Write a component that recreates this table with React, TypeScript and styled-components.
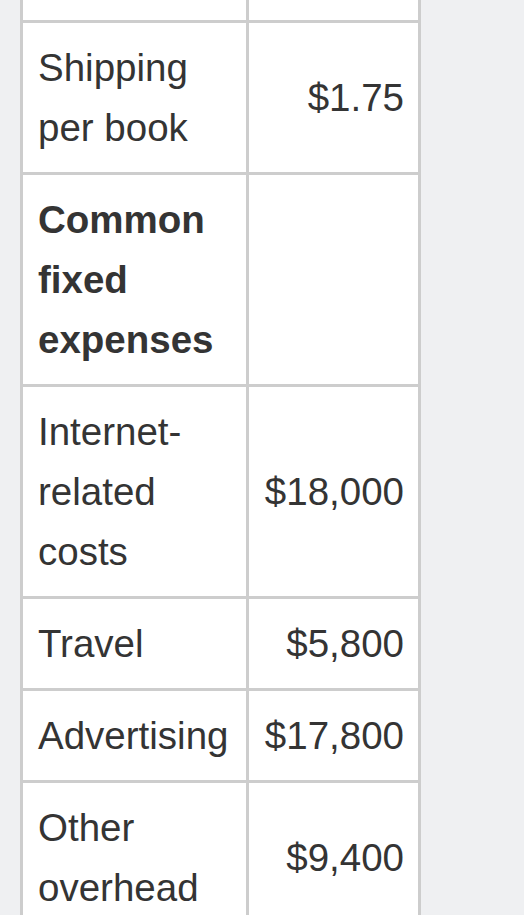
import React from 'react';
import styled, { createGlobalStyle } from 'styled-components';

const GlobalStyle = createGlobalStyle`
  html, body {
    margin: 0;
    padding: 0;
    background: #eff0f2;
  }
  body {
    font-family: 'Liberation Sans', Arial, sans-serif;
    color: #343434;
    overflow: hidden;
  }
`;

const Page = styled.div`
  height: 915px;
  overflow: hidden;
  padding-left: 20px;
`;

const Table = styled.table`
  width: 398px;
  border-collapse: collapse;
  table-layout: fixed;
  background: #ffffff;
  font-size: 38.5px;
  line-height: 60px;
`;

const LabelCol = styled.col`
  width: 226px;
`;

const ValueCol = styled.col`
  width: 172px;
`;

const Cell = styled.td<{ $align?: 'left' | 'right'; $bold?: boolean }>`
  border: 3px solid #cdcdcd;
  padding: 14.5px 14px 14.5px 15px;
  vertical-align: middle;
  text-align: ${(p) => p.$align ?? 'left'};
  font-weight: ${(p) => (p.$bold ? 700 : 400)};
  word-wrap: break-word;
`;

const StubCell = styled.td`
  border: 3px solid #cdcdcd;
  border-top: none;
  padding: 0;
  height: 20px;
`;

type Row = { label: string; value?: string; bold?: boolean };

const rows: Row[] = [
  { label: 'Shipping per book', value: '$1.75' },
  { label: 'Common fixed expenses', bold: true },
  { label: 'Internet-related costs', value: '$18,000' },
  { label: 'Travel', value: '$5,800' },
  { label: 'Advertising', value: '$17,800' },
  { label: 'Other overhead', value: '$9,400' },
];

const App: React.FC = () => (
  <>
    <GlobalStyle />
    <Page>
      <Table>
        <colgroup>
          <LabelCol />
          <ValueCol />
        </colgroup>
        <tbody>
          <tr>
            <StubCell />
            <StubCell />
          </tr>
          {rows.map((r) => (
            <tr key={r.label}>
              <Cell $bold={r.bold}>{r.label}</Cell>
              <Cell $align="right">{r.value ?? ''}</Cell>
            </tr>
          ))}
        </tbody>
      </Table>
    </Page>
  </>
);

export default App;
